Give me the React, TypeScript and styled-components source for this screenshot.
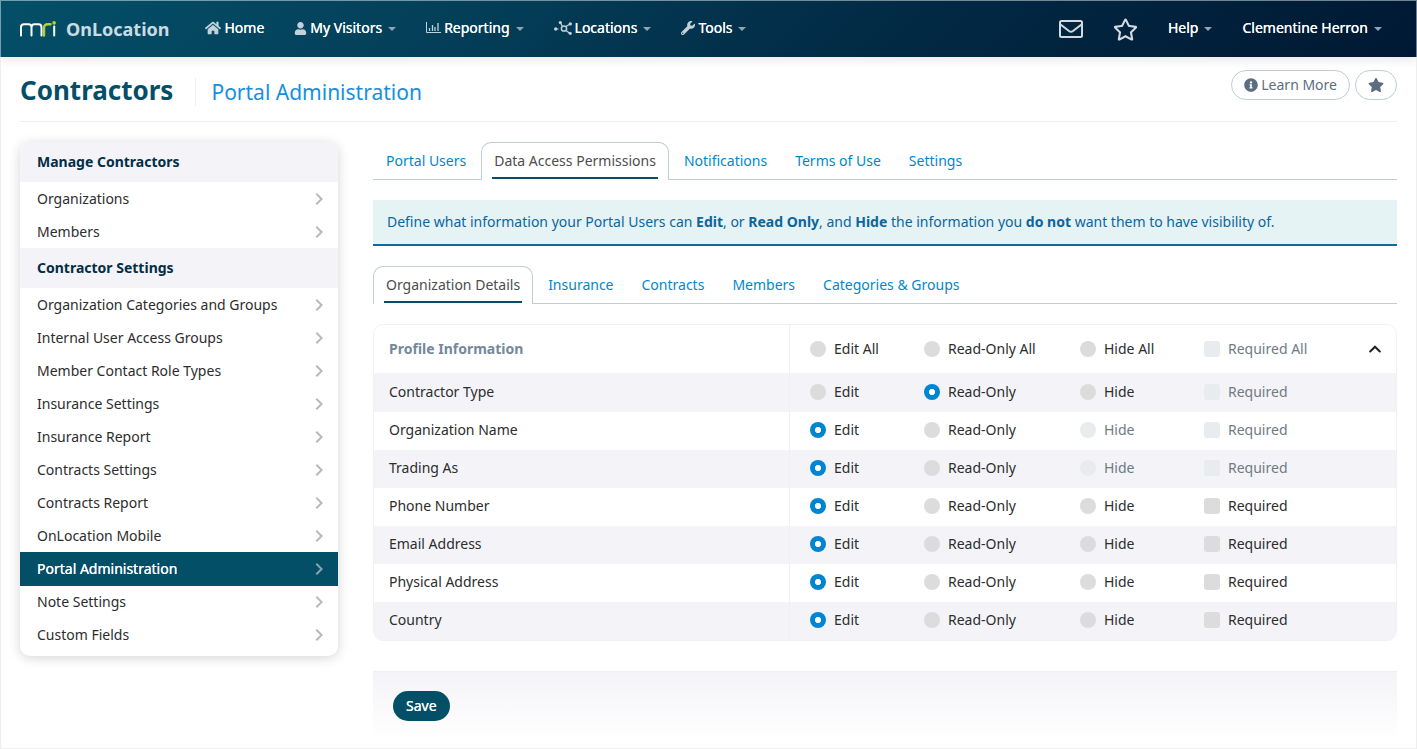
import React, { useState } from "react";
import styled, { createGlobalStyle, css } from "styled-components";
import { FaHome, FaInfoCircle, FaRegStar, FaStar, FaUser, FaWrench } from "react-icons/fa";

const GlobalStyle = createGlobalStyle`
  *, *::before, *::after { box-sizing: border-box; }
  body {
    margin: 0;
    background: #fff;
    color: #2d2d2d;
    font-family: "Noto Sans", sans-serif;
    font-size: 14px;
    line-height: 20px;
  }
  button, input { font: inherit; margin: 0; }
  a { text-decoration: none; }
`;

/* Slightly heavier than regular text, at the regular text's width. */
const strongText = css`
  text-shadow: 0 0 currentColor;
`;

const Page = styled.div`
  min-height: 100vh;
  display: flex;
  flex-direction: column;
`;

const TopBar = styled.header`
  display: flex;
  align-items: center;
  min-height: 57px;
  padding: 0 19px;
  border: 1px solid rgba(255, 255, 255, 0.45);
  border-bottom: 0;
  background: linear-gradient(135deg, #044f68 0%, #04405a 30%, #022b46 60%, #001833 100%) border-box;
  box-shadow: 0 2px 10px rgba(30, 20, 60, 0.12);
`;

const Brand = styled.a`
  display: flex;
  align-items: center;
  gap: 10px;
  margin-right: 21px;
  color: #c9dbe3;
  font-size: 18px;
  font-weight: 700;
`;

const Nav = styled.nav<{ $end?: boolean }>`
  display: flex;
  align-items: center;
  margin-left: ${(p) => (p.$end ? "auto" : "0")};
`;

const NavLink = styled.a`
  display: flex;
  align-items: center;
  gap: 3px;
  padding: 0 15px 2px;
  color: #fff;
  white-space: nowrap;
  ${strongText}
  svg { color: #c3d1da; }
`;

const Caret = styled.span`
  margin: 2px 0 0 3px;
  border: 4px solid transparent;
  border-top-color: #8fa5b3;
  border-bottom: 0;
`;

const IconLink = styled.a`
  display: flex;
  padding: 0 15px;
  color: #d3dbe1;
`;

const Body = styled.div`
  flex: 1;
  padding: 0 19px 7px;
  border: 1px solid #eee;
  border-top: 0;
`;

const PageHead = styled.div`
  display: flex;
  align-items: flex-start;
  justify-content: space-between;
  padding: 13px 0 15px;
  border-bottom: 1px solid #eee;
`;

const Titles = styled.div`
  display: flex;
  align-items: center;
  padding-top: 4px;
`;

const Title = styled.h1`
  margin: 0;
  padding-right: 22px;
  color: #044f68;
  font-size: 26px;
  line-height: 32px;
  font-weight: 700;
`;

const Subtitle = styled.h2`
  margin: 4px 0 0;
  padding-left: 15px;
  border-left: 1px solid #eee;
  color: #1590de;
  font-size: 21px;
  line-height: 28px;
  font-weight: 400;
`;

const Actions = styled.div`
  display: flex;
  gap: 5px;
`;

const PillButton = styled.button`
  display: flex;
  align-items: center;
  gap: 3px;
  height: 30px;
  padding: 0 12px;
  border: 1px solid #bfcdd1;
  border-radius: 15px;
  background: #fff;
  color: #5d6d80;
`;

const Columns = styled.div`
  display: flex;
  align-items: flex-start;
  gap: 35px;
  padding-top: 20px;
`;

const Sidebar = styled.nav`
  flex: 0 0 318px;
  padding-bottom: 5px;
  overflow: hidden;
  border-radius: 10px;
  background: #fff;
  box-shadow: 0 2px 12px rgba(0, 0, 0, 0.17);
`;

const SideHeading = styled.h3`
  margin: 0;
  padding: 10px 17px;
  background: #f4f4f8;
  color: #032e47;
  font-size: 14px;
  line-height: 20px;
  font-weight: 700;
`;

const SideLink = styled.a<{ $active?: boolean }>`
  display: flex;
  align-items: center;
  justify-content: space-between;
  min-height: 33px;
  padding: 0 15px 0 17px;
  color: #2d2d2d;
  svg { color: #b9b9b9; }
  ${(p) =>
    p.$active &&
    css`
      background: #044f68;
      box-shadow: 0 1px #044f68;
      color: #fff;
      ${strongText}
      svg { color: #8aa5b0; }
    `}
`;

const Main = styled.main`
  flex: 1;
  min-width: 0;
`;

const TabBar = styled.div`
  display: flex;
  gap: 2px;
  margin-bottom: 20px;
  box-shadow: inset 0 -1px #c0cdd1;
`;

const Tab = styled.button<{ $active: boolean }>`
  height: 38px;
  padding: 0 10px;
  border: 1px solid ${(p) => (p.$active ? "#c0cdd1" : "transparent")};
  border-bottom: 0;
  border-radius: 10px 10px 0 0;
  background: ${(p) => (p.$active ? "#fff" : "transparent")};
  color: ${(p) => (p.$active ? "#4d4d4d" : "#0088cc")};
  white-space: nowrap;
  cursor: pointer;
  span {
    display: block;
    padding: 7px 2px 6px;
    border-bottom: 2px solid ${(p) => (p.$active ? "#044f68" : "transparent")};
  }
`;

const Notice = styled.p`
  margin: 0 0 20px;
  padding: 12px 14px;
  border-bottom: 2px solid #0d6aa0;
  background: #e5f3f5;
  color: #0d659d;
`;

const Table = styled.table`
  width: 100%;
  table-layout: fixed;
  border: 1px solid #eff1f3;
  border-radius: 10px;
  border-spacing: 0;
  overflow: hidden;
`;

const Column = styled.col<{ $width?: number }>`
  width: ${(p) => (p.$width ? `${p.$width}px` : "auto")};
`;

const Row = styled.tr`
  height: 38px;
  &:nth-child(odd) { background: #f4f4f8; }
  th, td {
    padding: 0 0 2px;
    text-align: left;
    font-weight: 400;
    white-space: nowrap;
  }
  th:first-child {
    padding-left: 15px;
    border-right: 1px solid #eef0f3;
  }
  td:nth-child(2) { padding-left: 20px; }
`;

const HeadRow = styled(Row)`
  height: 49px;
  &:nth-child(odd) { background: #fff; }
  th, td {
    padding-bottom: 0;
    border-bottom: 1px solid #f4f4f8;
  }
  th:first-child {
    color: #74889b;
    font-weight: 700;
  }
`;

const Choice = styled.label<{ $muted?: boolean }>`
  display: flex;
  align-items: center;
  gap: 8px;
  color: ${(p) => (p.$muted ? "#6f7a83" : "#2d2d2d")};
`;

const Radio = styled.input`
  appearance: none;
  width: 16px;
  height: 16px;
  border-radius: 50%;
  background: #dcdcdc;
  &:checked { background: radial-gradient(closest-side, #fff 0 34%, #0085d3 44%); }
  &:disabled { background: #e8ecef; }
`;

const Check = styled.input`
  appearance: none;
  width: 16px;
  height: 16px;
  border-radius: 3px;
  background: #dcdcdc;
  &:checked { background: #0085d3; }
  &:disabled { background: #e8ecef; }
`;

const Collapse = styled.button`
  display: flex;
  padding: 4px;
  border: 0;
  background: none;
  color: #222;
`;

const FormFooter = styled.div`
  margin-top: 30px;
  padding: 19px 20px 20px;
  border-top: 1px solid #eff0f3;
  background: linear-gradient(#f4f4f8, #fff);
`;

const SaveButton = styled.button`
  display: block;
  height: 30px;
  padding: 0 13px;
  border: 0;
  border-radius: 15px;
  background: #044f68;
  color: #fff;
  ${strongText}
`;

const Logo = () => (
  <svg width="36" height="17" viewBox="0 0 36 17" fill="none" strokeWidth="2" strokeLinecap="round">
    <path d="M1 14.500V6.200Q1 3.200 4 3.200H8.500Q11.500 3.200 11.500 6.200V14.500M11.500 6.200Q11.500 3.200 14.500 3.200H18.500Q21.500 3.200 21.500 6.200V14.500" stroke="#fff" />
    <path d="M24 14.500V7.200Q24 3.200 28 3.200H30.500" stroke="#b5d334" strokeWidth="2.400" />
    <path d="M34.200 5.500V14.500" stroke="#fff" />
    <circle cx="34.100" cy="1.900" r="1.800" fill="#b5d334" />
  </svg>
);

const ChartIcon = () => (
  <svg width="15" height="12" viewBox="0 0 15 12" fill="none" stroke="currentColor">
    <path d="M.5 0V10.500H15" />
    <path d="M3.500 6V9M6.500 3V9M9 5V9M12 1V9" strokeWidth="1.300" />
  </svg>
);

const NetworkIcon = () => (
  <svg width="18" height="14" viewBox="0 0 18 14" fill="none" stroke="currentColor" strokeWidth="1.200">
    <path d="M2 8H4.500M8.500 5.500L6.500 2M12 5.500L16 3M12 9.500L16 12.500" />
    <circle cx="10" cy="7.500" r="2.600" strokeWidth="1.500" />
    <g fill="currentColor" stroke="none">
      <circle cx="1.700" cy="8" r="1.700" />
      <circle cx="6.300" cy="1.600" r="1.600" />
      <circle cx="16.300" cy="2.900" r="1.700" />
      <circle cx="16.200" cy="12.300" r="1.600" />
    </g>
  </svg>
);

const MailIcon = () => (
  <svg width="24" height="18" viewBox="0 0 24 18" fill="none" stroke="currentColor" strokeWidth="2" strokeLinejoin="round">
    <rect x="1" y="1" width="22" height="16" rx="1.500" />
    <path d="M1.500 4.500L10 11Q12 12.400 14 11L22.500 4.500" />
  </svg>
);

const ChevronRight = () => (
  <svg width="8" height="12" viewBox="0 0 8 12" fill="none" stroke="currentColor" strokeWidth="2">
    <path d="M1.300 .8L6.600 6L1.300 11.200" />
  </svg>
);

const ChevronUp = () => (
  <svg width="12" height="8" viewBox="0 0 12 8" fill="none" stroke="currentColor" strokeWidth="2" strokeLinecap="round">
    <path d="M1.200 6.500L6 1.700L10.800 6.500" />
  </svg>
);

const sections = [
  { heading: "Manage Contractors", links: ["Organizations", "Members"] },
  {
    heading: "Contractor Settings",
    links: [
      "Organization Categories and Groups",
      "Internal User Access Groups",
      "Member Contact Role Types",
      "Insurance Settings",
      "Insurance Report",
      "Contracts Settings",
      "Contracts Report",
      "OnLocation Mobile",
      "Portal Administration",
      "Note Settings",
      "Custom Fields",
    ],
  },
];

const menus = [
  { label: "Home", icon: <FaHome size={16} />, caret: false },
  { label: "My Visitors", icon: <FaUser size={13} />, caret: true },
  { label: "Reporting", icon: <ChartIcon />, caret: true },
  { label: "Locations", icon: <NetworkIcon />, caret: true },
  { label: "Tools", icon: <FaWrench size={14} />, caret: true },
];

type Access = "Edit" | "Read-Only" | "Hide";
const levels: Access[] = ["Edit", "Read-Only", "Hide"];

const fields: { name: string; access: Access; noHide?: boolean; noRequired?: boolean }[] = [
  { name: "Contractor Type", access: "Read-Only", noRequired: true },
  { name: "Organization Name", access: "Edit", noHide: true, noRequired: true },
  { name: "Trading As", access: "Edit", noHide: true, noRequired: true },
  { name: "Phone Number", access: "Edit" },
  { name: "Email Address", access: "Edit" },
  { name: "Physical Address", access: "Edit" },
  { name: "Country", access: "Edit" },
];

function Tabs({ items, initial }: { items: string[]; initial: string }) {
  const [current, setCurrent] = useState(initial);
  return (
    <TabBar role="tablist">
      {items.map((item) => (
        <Tab key={item} type="button" role="tab" aria-selected={item === current} $active={item === current} onClick={() => setCurrent(item)}>
          <span>{item}</span>
        </Tab>
      ))}
    </TabBar>
  );
}

export default function App() {
  return (
    <>
      <GlobalStyle />
      <Page>
        <TopBar>
          <Brand href="#">
            <Logo />
            OnLocation
          </Brand>
          <Nav aria-label="Main">
            {menus.map((menu) => (
              <NavLink key={menu.label} href="#">
                {menu.icon}
                {menu.label}
                {menu.caret && <Caret />}
              </NavLink>
            ))}
          </Nav>
          <Nav $end aria-label="Account">
            <IconLink href="#" aria-label="Messages"><MailIcon /></IconLink>
            <IconLink href="#" aria-label="Favorites"><FaRegStar size={25} /></IconLink>
            <NavLink href="#">Help<Caret /></NavLink>
            <NavLink href="#">Clementine Herron<Caret /></NavLink>
          </Nav>
        </TopBar>
        <Body>
          <PageHead>
            <Titles>
              <Title>Contractors</Title>
              <Subtitle>Portal Administration</Subtitle>
            </Titles>
            <Actions>
              <PillButton type="button"><FaInfoCircle size={14} />Learn More</PillButton>
              <PillButton type="button" aria-label="Add to favorites"><FaStar size={16} /></PillButton>
            </Actions>
          </PageHead>
          <Columns>
            <Sidebar aria-label="Contractors">
              {sections.map((section) => (
                <React.Fragment key={section.heading}>
                  <SideHeading>{section.heading}</SideHeading>
                  {section.links.map((link) => (
                    <SideLink key={link} href="#" $active={link === "Portal Administration"}>
                      {link}
                      <ChevronRight />
                    </SideLink>
                  ))}
                </React.Fragment>
              ))}
            </Sidebar>
            <Main>
              <Tabs items={["Portal Users", "Data Access Permissions", "Notifications", "Terms of Use", "Settings"]} initial="Data Access Permissions" />
              <Notice>
                Define what information your Portal Users can <b>Edit</b>, or <b>Read Only</b>, and <b>Hide</b> the information you <b>do not</b> want them to have visibility of.
              </Notice>
              <Tabs items={["Organization Details", "Insurance", "Contracts", "Members", "Categories & Groups"]} initial="Organization Details" />
              <Table>
                <colgroup>
                  <Column />
                  <Column $width={134} />
                  <Column $width={156} />
                  <Column $width={124} />
                  <Column $width={161} />
                  <Column $width={31} />
                </colgroup>
                <thead>
                  <HeadRow>
                    <th scope="col">Profile Information</th>
                    {levels.map((level) => (
                      <td key={level}>
                        <Choice><Radio type="radio" name="all" />{level} All</Choice>
                      </td>
                    ))}
                    <td><Choice $muted><Check type="checkbox" disabled />Required All</Choice></td>
                    <td><Collapse type="button" aria-label="Collapse section"><ChevronUp /></Collapse></td>
                  </HeadRow>
                </thead>
                <tbody>
                  {fields.map((field) => (
                    <Row key={field.name}>
                      <th scope="row">{field.name}</th>
                      {levels.map((level) => {
                        const off = level === "Hide" && field.noHide;
                        return (
                          <td key={level}>
                            <Choice $muted={off}>
                              <Radio type="radio" name={field.name} defaultChecked={level === field.access} disabled={off} />
                              {level}
                            </Choice>
                          </td>
                        );
                      })}
                      <td colSpan={2}>
                        <Choice $muted={field.noRequired}>
                          <Check type="checkbox" disabled={field.noRequired} />
                          Required
                        </Choice>
                      </td>
                    </Row>
                  ))}
                </tbody>
              </Table>
              <FormFooter>
                <SaveButton type="button">Save</SaveButton>
              </FormFooter>
            </Main>
          </Columns>
        </Body>
      </Page>
    </>
  );
}
